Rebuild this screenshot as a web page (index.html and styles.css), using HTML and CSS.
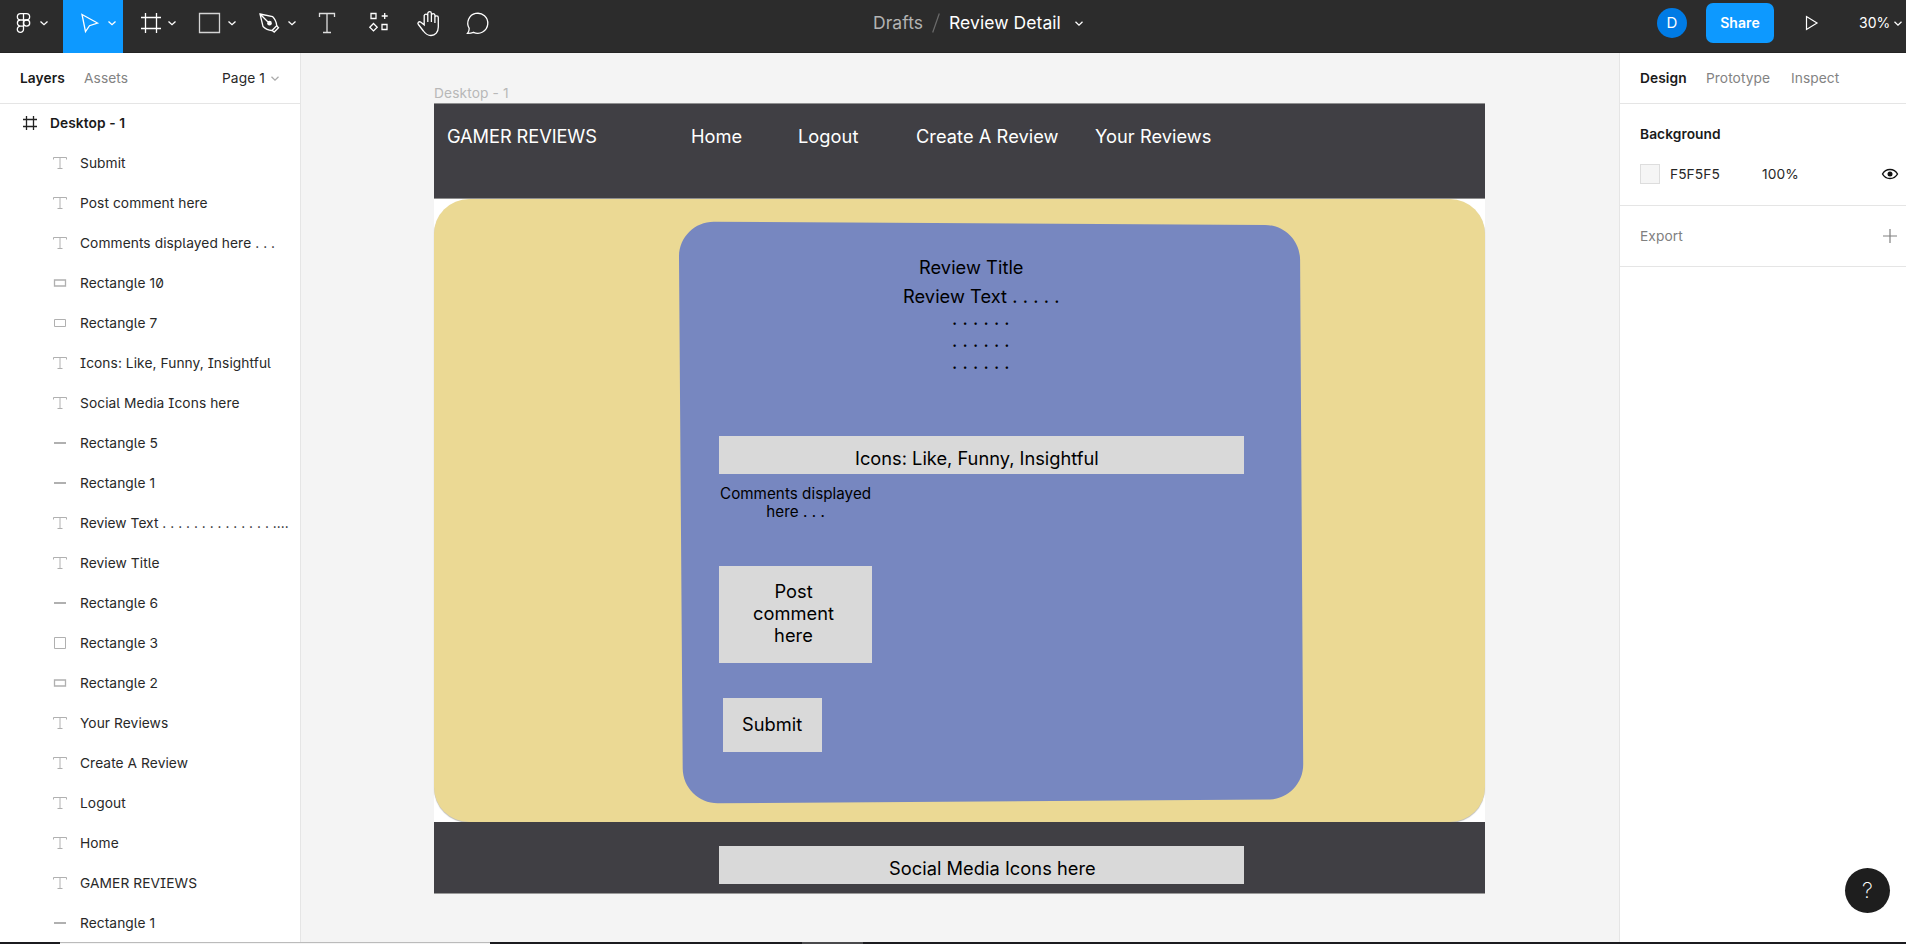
FILE: index.html
```html
<!DOCTYPE html>
<html lang="en">
<head>
<meta charset="utf-8">
<title>Review Detail</title>
<link rel="stylesheet" href="styles.css">
</head>
<body>
<svg class="defs" width="0" height="0">
  <symbol id="text" viewBox="0 0 16 16"><path d="M1.500 4.500v-2h13v2M8 2.500v11M5.500 13.500h5" /></symbol>
  <symbol id="line" viewBox="0 0 16 16"><path d="M2 8h12" stroke-width="2"/></symbol>
  <symbol id="wide" viewBox="0 0 16 16"><path d="M2.500 5h11v6h-11z" stroke-width="1.300"/></symbol>
  <symbol id="mid" viewBox="0 0 16 16"><path d="M2.500 4.500h11v7h-11z"/></symbol>
  <symbol id="square" viewBox="0 0 16 16"><path d="M2.500 2.500h11v11h-11z"/></symbol>
  <symbol id="chev" viewBox="0 0 8 5"><path d="M.5 .7 4 4.100 7.500 .7"/></symbol>
</svg>
<header class="toolbar">
  <nav class="tools">
    <svg class="logo" viewBox="0 0 63 53"><path d="M23.500 13.700h-3a3.100 3.100 0 0 0 0 6.300h3zM23.500 13.700h3a3.100 3.100 0 0 1 0 6.300h-3zM23.500 20h-3a3.100 3.100 0 0 0 0 6.200h3zM23.500 26.200h-3a3.100 3.100 0 1 0 3 3.100z"/><circle cx="26.600" cy="23.100" r="3.100"/><path d="m40.500 21.500 3.500 3.200 3.500-3.200"/></svg>
    <svg class="active" viewBox="63 0 60 53"><path d="m82 14.500 15.500 8.500-8 2.700-4 6z"/><path d="m108.500 21.500 3.500 3.200 3.500-3.200"/></svg>
    <svg viewBox="123 0 60 53"><path d="M145.500 13v20M156.500 13v20M141 17.500h20M141 28.500h20"/><path d="m168.500 21.500 3.500 3.200 3.500-3.200"/></svg>
    <svg viewBox="183 0 60 53"><path d="M199.500 13.500h20v19h-20z" stroke-opacity=".8"/><path d="m228.500 21.500 3.500 3.200 3.500-3.200"/></svg>
    <svg viewBox="243 0 60 53"><path d="m260 14 12.500 2.500c2.500 2.500 4 5.500 4.200 9.200l-4.700 4.800c-3.500-.2-6.500-1.500-9-4zM260 14l8 8"/><path d="m276.500 25.500 2 2.200-4.300 4.300-2.200-1.800"/><circle cx="269.500" cy="23.200" r="1.700" fill="#fff"/><path d="m288.500 21.500 3.500 3.200 3.500-3.200"/></svg>
    <svg class="short" viewBox="303 0 50 53"><path d="M319.500 17v-3.500h15V17M327 13.500v19M323 32.500h8" stroke-opacity=".85"/></svg>
    <svg class="short" viewBox="353 0 50 53"><path d="M371 13.500h5v5h-5zM382 24.500h5v5h-5zM384.700 13v6M381.700 16h6M373.500 23.500l3.700 3.700-3.700 3.700-3.700-3.700z"/></svg>
    <svg class="short" viewBox="403 0 50 53"><path d="M424.200 23v-7.500a1.900 1.900 0 0 1 3.600 0M427.800 22v-8.500a1.800 1.800 0 0 1 3.600 0V22M431.400 15a1.800 1.800 0 0 1 3.500 0v8M434.900 17.500a1.700 1.700 0 0 1 3.400 0V27c0 5-3 8.500-7.300 8.500-4 0-5.500-1.500-7.600-4.500l-5-6.500c-1.500-2 .7-3.500 2.500-2.300l3.300 2.600V15.500"/></svg>
    <svg class="short" viewBox="453 0 50 53"><path d="M469.200 28.400a10 10 0 1 1 4.300 3.900c-2 .9-3.800 1-6 1 1.200-1.500 1.800-3 1.700-4.900z"/></svg>
  </nav>
  <div class="crumbs"><span class="drafts">Drafts</span><svg class="slash" viewBox="0 0 8 20"><path d="M7.300.5.7 19.500"/></svg><span class="file">Review Detail</span><svg class="chev"><use href="#chev"/></svg></div>
  <div class="account"><span class="avatar">D</span><span class="share">Share</span><svg class="play" viewBox="0 0 14 16"><path d="M1.500 1.500v13L12 8z"/></svg><span class="zoom">30%</span><svg class="chev"><use href="#chev"/></svg></div>
</header>
<main class="workspace">
  <aside class="left">
    <div class="tabs"><b>Layers</b><span class="muted assets">Assets</span><span class="page">Page 1</span><svg class="chev"><use href="#chev"/></svg></div>
    <ul class="layers">
      <li class="root"><svg viewBox="0 0 16 16"><path d="M4.500 1v14M11.500 1v14M1 4.500h14M1 11.500h14"/></svg><b>Desktop - 1</b></li>
      <li><svg><use href="#text"/></svg>Submit</li>
      <li><svg><use href="#text"/></svg>Post comment here</li>
      <li><svg><use href="#text"/></svg>Comments displayed here . . .</li>
      <li><svg><use href="#wide"/></svg>Rectangle 10</li>
      <li><svg><use href="#mid"/></svg>Rectangle 7</li>
      <li><svg><use href="#text"/></svg>Icons: Like, Funny, Insightful</li>
      <li><svg><use href="#text"/></svg>Social Media Icons here</li>
      <li><svg><use href="#line"/></svg>Rectangle 5</li>
      <li><svg><use href="#line"/></svg>Rectangle 1</li>
      <li class="dotted"><svg><use href="#text"/></svg>Review Text . . . . . . . . . . . . . . ....</li>
      <li><svg><use href="#text"/></svg>Review Title</li>
      <li><svg><use href="#line"/></svg>Rectangle 6</li>
      <li><svg><use href="#square"/></svg>Rectangle 3</li>
      <li><svg><use href="#wide"/></svg>Rectangle 2</li>
      <li><svg><use href="#text"/></svg>Your Reviews</li>
      <li><svg><use href="#text"/></svg>Create A Review</li>
      <li><svg><use href="#text"/></svg>Logout</li>
      <li><svg><use href="#text"/></svg>Home</li>
      <li><svg><use href="#text"/></svg>GAMER REVIEWS</li>
      <li><svg><use href="#line"/></svg>Rectangle 1</li>
    </ul>
  </aside>
  <section class="canvas">
    <div class="frame-name">Desktop - 1</div>
    <div class="artboard">
      <div class="site-head"></div>
      <div class="site-body"></div>
      <div class="site-foot"></div>
      <svg class="card" viewBox="0 0 1051 790"><path d="M280 118.800 831 122C850.500 122.100 866 137.500 866.100 157L869.200 661C869.400 680.500 854 696.300 834.500 696.500L284 700.200C264.500 700.300 248.800 684.700 248.700 665.200L245 154C244.900 134.500 260.500 118.700 280 118.800Z"/></svg>
      <span class="node brand light">GAMER REVIEWS</span>
      <span class="node home light">Home</span>
      <span class="node logout light">Logout</span>
      <span class="node create light">Create A Review</span>
      <span class="node yours light">Your Reviews</span>
      <span class="node title">Review Title</span>
      <span class="node body">Review Text . . . . .</span>
      <span class="node dots">. . . . . .<br>. . . . . .<br>. . . . . .</span>
      <div class="box icons"></div><span class="node icons-text">Icons: Like, Funny, Insightful</span>
      <span class="node comments">Comments displayed<br>here . . .</span>
      <div class="box post"></div><span class="node post-text">Post<br>comment<br>here</span>
      <div class="box submit"></div><span class="node submit-text">Submit</span>
      <div class="box social"></div><span class="node social-text">Social Media Icons here</span>
    </div>
  </section>
  <aside class="right">
    <div class="tabs"><b>Design</b><span class="muted proto">Prototype</span><span class="muted inspect">Inspect</span></div>
    <div class="background"><b>Background</b>
      <div class="fill"><i class="swatch"></i><span class="hex">F5F5F5</span><span class="alpha">100%</span><svg viewBox="0 0 18 12"><path d="M1.500 6Q4 1.500 9 1.500T16.500 6Q14 10.500 9 10.500T1.500 6z"/><circle cx="9" cy="6" r="2.500"/></svg></div>
    </div>
    <div class="export"><span>Export</span><svg viewBox="0 0 14 14"><path d="M7 0v14M0 7h14"/></svg></div>
  </aside>
</main>
<div class="help">?</div>
<div class="strip"><i class="dark first"></i><i class="pale"></i><i class="dark second"></i><i class="gray"></i><i class="dark rest"></i></div>
</body>
</html>
```
FILE: styles.css
```css
* { box-sizing: border-box; }
body { margin: 0; width: 1906px; height: 944px; overflow: hidden; position: relative; display: flex; flex-direction: column; font: 370 13.750px/20px Inter, sans-serif; letter-spacing: .07px; color: #282828; background: #f4f4f4; }
svg { display: block; flex: none; fill: none; stroke: currentColor; stroke-width: 1.200; }
b { font-weight: 560; color: #1a1a1a; }
.defs { position: absolute; }
.toolbar { height: 53px; flex: none; display: flex; background: #2c2c2c; color: #fff; border-bottom: 1px solid #242424; }
.tools { display: flex; width: 873px; }
.tools svg { width: 60px; height: 53px; stroke-width: 1.300; }
.tools .logo { width: 63px; }
.tools .active { background: #0d99ff; }
.tools .short { width: 50px; }
.chev { width: 8px; height: 5px; stroke-width: 1.300; }
.crumbs { display: flex; align-items: center; height: 46px; width: 784px; font-size: 17.500px; }
.drafts { width: 59px; color: #b3b3b3; }
.slash { width: 8px; height: 20px; margin-right: 9px; color: #6c6c6c; }
.file { width: 126px; font-weight: 400; }
.account { display: flex; align-items: center; height: 46px; }
.avatar { width: 30px; height: 30px; border-radius: 50%; background: #007be5; text-align: center; line-height: 30px; font-size: 15px; }
.share { width: 68px; height: 40px; margin-left: 19px; border-radius: 7px; background: #0d99ff; text-align: center; line-height: 39px; font-weight: 580; font-size: 14px; }
.play { width: 14px; height: 16px; margin-left: 31px; }
.zoom { width: 35px; margin-left: 40px; font-size: 14px; font-weight: 400; }
.workspace { display: flex; flex: 1; min-height: 0; }
.left { width: 301px; background: #fff; border-right: 1px solid #e5e5e5; overflow: hidden; }
.tabs { display: flex; align-items: center; height: 51px; border-bottom: 1px solid #e5e5e5; }
.left .tabs { padding-left: 20px; }
.left .tabs b { width: 64px; }
.muted { color: #838383; }
.assets { width: 138px; }
.page { width: 49px; }
.left .chev { color: #aaa; }
.layers { list-style: none; margin: 0; padding: 0; font-feature-settings: "ss02"; }
.layers li { height: 40px; padding-left: 52px; display: flex; align-items: center; white-space: nowrap; }
.layers .dotted { letter-spacing: .03px; }
.layers svg { width: 16px; height: 16px; margin-right: 12px; color: #b0b0b0; stroke-width: 1; }
.layers .root { padding-left: 22px; height: 38px; margin-bottom: 1px; }
.layers .root svg { color: #222; stroke-width: 1.300; }
.canvas { width: 1318px; padding: 29px 0 0 133px; }
.frame-name { height: 21px; line-height: 22px; color: #b8b8b8; letter-spacing: .12px; white-space: nowrap; }
.artboard { position: relative; width: 1051px; height: 790px; background: #fff; }
.site-head { height: 96px; background: #403f44; border: 1px solid #8f8f90; border-width: 1px 0; }
.site-body { height: 623px; border-radius: 35px; background: #ebd994; box-shadow: 0 1px 1px #bbb; }
.site-foot { height: 72px; background: #403f44; position: relative; border-bottom: 1px solid #999; }
.card { position: absolute; inset: 0; width: 1051px; height: 790px; stroke: none; fill: #7787c0; }
.node { position: absolute; font-size: 18.250px; font-weight: 380; line-height: 22px; letter-spacing: .04px; color: #000; text-align: center; white-space: nowrap; }
.light { color: #fff; top: 22px; }
.brand { left: 13px; letter-spacing: -.09px; }
.home { left: 257px; }
.logout { left: 364px; }
.create { left: 482px; }
.yours { left: 661px; }
.title { left: 485px; top: 153px; }
.body { left: 469px; top: 182px; }
.dots { left: 518px; top: 204px; }
.box { position: absolute; background: #d9d9d9; }
.icons { left: 285px; top: 333px; width: 525px; height: 38px; }
.icons-text { left: 421px; top: 344px; letter-spacing: 0; }
.comments { left: 286px; top: 382px; font-size: 15.200px; line-height: 18.300px; }
.post { left: 285px; top: 463px; width: 153px; height: 97px; }
.post-text { left: 319px; top: 477px; }
.submit { left: 289px; top: 595px; width: 99px; height: 54px; }
.submit-text { left: 308px; top: 610px; }
.social { left: 285px; top: 743px; width: 525px; height: 38px; }
.social-text { left: 455px; top: 754px; }
.right { width: 287px; background: #fff; border-left: 1px solid #e5e5e5; }
.right .tabs { padding-left: 20px; }
.right .tabs b { width: 66px; }
.proto { width: 85px; }
.background { height: 102px; padding: 20px 0 0 20px; border-bottom: 1px solid #e5e5e5; }
.background b { display: block; height: 40px; line-height: 21px; }
.fill { display: flex; align-items: center; height: 20px; }
.swatch { width: 20px; height: 20px; margin-right: 10px; background: #f5f5f5; border: 1px solid #ddd; }
.hex { width: 92px; }
.alpha { width: 119px; }
.fill svg { width: 18px; height: 12px; color: #111; stroke-width: 1.400; }
.fill circle { fill: #111; stroke: none; }
.export { height: 61px; padding: 0 9px 0 20px; display: flex; align-items: center; justify-content: space-between; border-bottom: 1px solid #e5e5e5; color: #808080; }
.export svg { width: 14px; height: 14px; }
.help { position: absolute; left: 1845px; top: 868px; width: 45px; height: 45px; border-radius: 50%; background: #1e1e1e; color: #fff; font-size: 22px; font-weight: 200; line-height: 45px; text-align: center; }
.strip { position: absolute; left: 0; right: 0; bottom: 0; height: 2px; display: flex; }
.dark { background: #1b1b1f; }
.first { width: 60px; }
.pale { width: 430px; background: #f4f4f4; border-top: 1px solid #bbb; }
.second { width: 312px; }
.gray { width: 61px; background: #4a4a4c; }
.rest { flex: 1; }
```
